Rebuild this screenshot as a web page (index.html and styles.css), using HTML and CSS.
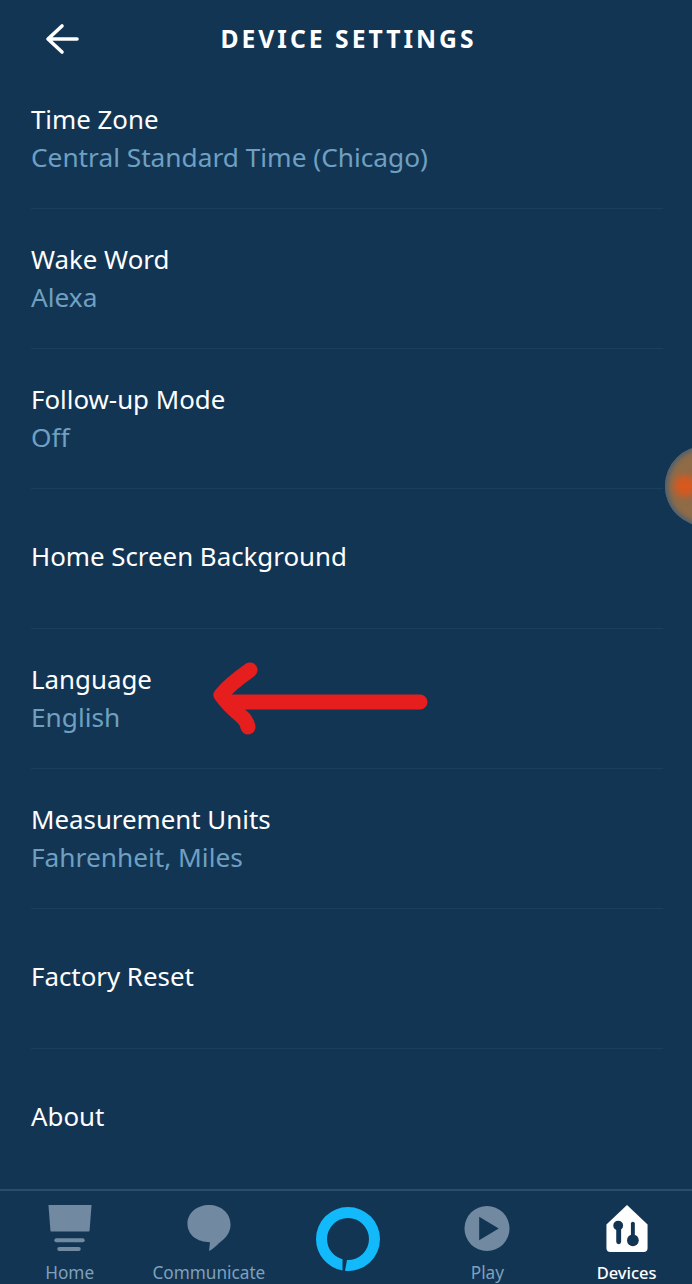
FILE: index.html
```html
<!DOCTYPE html>
<html lang="en">
<head>
    <meta charset="UTF-8">
    <meta name="viewport" content="width=device-width, initial-scale=1.0">
    <title>Device Settings</title>
    <link rel="stylesheet" href="styles.css">
</head>
<body>
    <div class="screen">
        <header class="topbar">
            <svg class="back" viewBox="0 0 36 34" width="36" height="34">
                <path d="M33 17H5M18 4L4 17l14 13" fill="none" stroke="#fff" stroke-width="3.6" stroke-linecap="round" stroke-linejoin="round"/>
            </svg>
            <h1 class="title">DEVICE SETTINGS</h1>
        </header>

        <div class="list">
            <div class="row"><div class="name">Time Zone</div><div class="value">Central Standard Time (Chicago)</div></div>
            <div class="row"><div class="name">Wake Word</div><div class="value">Alexa</div></div>
            <div class="row"><div class="name">Follow-up Mode</div><div class="value">Off</div></div>
            <div class="row single"><div class="name">Home Screen Background</div></div>
            <div class="row"><div class="name">Language</div><div class="value">English</div></div>
            <div class="row"><div class="name">Measurement Units</div><div class="value">Fahrenheit, Miles</div></div>
            <div class="row single"><div class="name">Factory Reset</div></div>
            <div class="row single last"><div class="name">About</div></div>
        </div>

        <nav class="tabs">
            <div class="tab">
                <svg viewBox="0 0 44 48" width="44" height="48">
                    <path d="M0 0h44l-2 26q0 1-1 1H3q-1 0-1-1z" fill="#7189a1"/>
                    <rect x="6" y="34" width="31" height="4" rx="2" fill="#7189a1"/>
                    <rect x="9" y="43" width="24" height="4" rx="2" fill="#7189a1"/>
                </svg>
                <span>Home</span>
            </div>
            <div class="tab">
                <svg viewBox="0 0 44 48" width="44" height="48">
                    <path d="M22 0C34 0 44 8 44 20c0 9-6 15-12 19-3 3-6 6-10 8l1-9C10 38 0 31 0 19 0 8 10 0 22 0z" fill="#7189a1"/>
                </svg>
                <span>Communicate</span>
            </div>
            <div class="tab">
                <svg class="alexa" viewBox="0 0 64 64" width="64" height="64">
                    <path d="M29 63.86A32 32 0 0 0 64 32A32 32 0 0 0 0 32A32 32 0 0 0 26.5 63.52V52.27A21 21 0 0 1 11 32A21 21 0 0 1 53 32A21 21 0 0 1 31 52.98Z" fill="#12b9fb"/>
                </svg>
            </div>
            <div class="tab">
                <svg viewBox="0 0 46 48" width="46" height="48">
                    <circle cx="23" cy="24" r="23" fill="#7189a1"/>
                    <path d="M15 12l20 12-20 12z" fill="#133554"/>
                </svg>
                <span>Play</span>
            </div>
            <div class="tab active">
                <svg viewBox="0 0 44 48" width="44" height="48">
                    <path d="M22 0L43 20v24q0 4-4 4H5q-4 0-4-4V20z" fill="#fff"/>
                    <circle cx="13" cy="21" r="5" fill="#133554"/>
                    <rect x="11" y="21" width="5" height="19" rx="2.5" fill="#133554"/>
                    <circle cx="28" cy="36" r="6" fill="#133554"/>
                    <rect x="26" y="17" width="4" height="19" rx="2" fill="#133554"/>
                </svg>
                <span>Devices</span>
            </div>
        </nav>

        <div class="blob"><div class="blob-dot"></div></div>

        <svg class="arrow" viewBox="0 0 230 80" width="230" height="80">
            <path d="M222 42H30M52 10C42 17 32 24 23 35C30 45 36 50 42 55C46 58 49 62 50 67" fill="none" stroke="#e61e1e" stroke-width="15" stroke-linecap="round" stroke-linejoin="round"/>
        </svg>
    </div>
</body>
</html>
```

FILE: styles.css
```css
* {
    margin: 0;
    padding: 0;
    box-sizing: border-box;
}

body {
    font-family: "Noto Sans", Arial, sans-serif;
    background-color: #133554;
    overflow: hidden;
}

.screen {
    position: relative;
    display: flex;
    flex-direction: column;
    width: 692px;
    height: 1284px;
    background-color: #133554;
    overflow: hidden;
}

.topbar {
    position: relative;
    display: flex;
    align-items: center;
    justify-content: center;
    height: 69px;
    padding-top: 8px;
    padding-left: 5px;
    flex-shrink: 0;
}

.back {
    position: absolute;
    left: 44px;
    top: 22px;
}

.title {
    font-size: 24.7px;
    font-weight: 700;
    letter-spacing: 3px;
    color: #fff;
}

.list {
    flex: 1;
    padding: 0 29px 0 31px;
}

.row {
    display: flex;
    flex-direction: column;
    justify-content: center;
    height: 140px;
    padding-bottom: 2px;
    border-bottom: 1px solid #1b3e5d;
}

.row.single {
    padding-bottom: 6px;
}

.row.last {
    border-bottom: none;
}

.name {
    font-size: 25.85px;
    line-height: 38px;
    color: #fff;
}

.value {
    font-size: 26.25px;
    line-height: 38px;
    color: #6fa0c2;
}

.tabs {
    display: flex;
    height: 95px;
    padding-top: 14px;
    border-top: 2px solid #2b4c6a;
    flex-shrink: 0;
}

.tab {
    display: flex;
    flex-direction: column;
    align-items: center;
    width: 139.25px;
    flex-shrink: 0;
    color: #7fa0bc;
    font-size: 17.2px;
    line-height: 22px;
    gap: 10px;
}

.tab.active {
    color: #fff;
    font-size: 16.5px;
    font-weight: 500;
}

.alexa {
    margin-top: 2px;
}

.blob {
    position: absolute;
    left: 665px;
    top: 446px;
    width: 80px;
    height: 80px;
    display: flex;
    align-items: center;
    padding-left: 9px;
    border-radius: 50%;
    background-color: #8f6b47;
    box-shadow: inset 0 0 4px 3px #4f6170;
}

.blob-dot {
    width: 22px;
    height: 22px;
    border-radius: 50%;
    background-color: #d6591f;
    filter: blur(3px);
}

.arrow {
    position: absolute;
    left: 198px;
    top: 660px;
}
```
